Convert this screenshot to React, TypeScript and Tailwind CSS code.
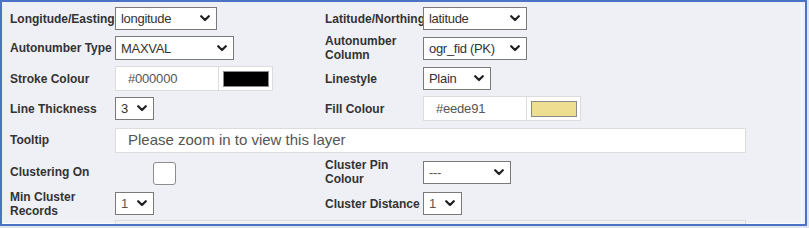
import React from "react";

const font = { fontFamily: '"Liberation Sans", Arial, sans-serif' };

function Chevron() {
  return (
    <svg width="10" height="7" viewBox="0 0 10 7" className="shrink-0">
      <polyline points="1.2,1.2 5,5 8.8,1.2" fill="none" stroke="#1f1f1f" strokeWidth="2.2" strokeLinecap="round" strokeLinejoin="round" />
    </svg>
  );
}

function Select({ value, w, h = "h-[23px]", muted = false }: { value: string; w: string; h?: string; muted?: boolean }) {
  return (
    <div className={`${w} ${h} flex items-center justify-between border border-[#7a7a7a] bg-white pl-[5px] pr-[6px] shrink-0`}>
      <span className={`text-[13px] tracking-[-0.3px] leading-none ${muted ? "text-[#555]" : "text-[#333]"}`}>{value}</span>
      <Chevron />
    </div>
  );
}

function ColourInput({ value, swatch }: { value: string; swatch: string }) {
  return (
    <div className="flex shrink-0">
      <div className="w-[104px] h-[25px] flex items-center border border-[#dcdcdc] bg-white pl-[12px] text-[13px] text-[#555] tracking-[-0.2px]">
        {value}
      </div>
      <div className="w-[54px] h-[25px] flex items-center justify-center border border-[#dcdcdc] border-l-0 bg-white">
        <div className={`w-[46px] h-[16px] border border-[#8a8a8a] ${swatch}`} />
      </div>
    </div>
  );
}

function Label({ children, w }: { children: React.ReactNode; w: string }) {
  return (
    <div className={`${w} shrink-0 text-[12px] font-bold leading-[14px] text-[#333]`}>{children}</div>
  );
}

export default function App() {
  return (
    <div style={font} className="w-[809px] h-[228px] bg-[#dfe5f0]">
      <div className="w-[807px] h-[226px] border-2 border-[#4a73c6] bg-[#eef0f5] overflow-hidden">
        <div className="h-full border-r border-b border-[#fafbfd] pl-[8px] pt-[2px] w-[800px] relative">
          {/* Row 1 */}
          <div className="h-[29px] flex items-center">
            <div className="w-[315px] flex items-center">
              <Label w="w-[105px]">Longitude/Easting</Label>
              <Select value="longitude" w="w-[102px]" />
            </div>
            <Label w="w-[98px]">Latitude/Northing</Label>
            <Select value="latitude" w="w-[104px]" />
          </div>
          {/* Row 2 */}
          <div className="h-[30px] flex items-center">
            <div className="w-[315px] flex items-center">
              <Label w="w-[105px]">Autonumber Type</Label>
              <Select value="MAXVAL" w="w-[119px]" h="h-[24px]" />
            </div>
            <Label w="w-[98px]">
              Autonumber
              <br />
              Column
            </Label>
            <Select value="ogr_fid (PK)" w="w-[104px]" />
          </div>
          {/* Row 3 */}
          <div className="h-[31px] flex items-center">
            <div className="w-[315px] flex items-center">
              <Label w="w-[105px]">Stroke Colour</Label>
              <ColourInput value="#000000" swatch="bg-black" />
            </div>
            <Label w="w-[98px]">Linestyle</Label>
            <Select value="Plain" w="w-[68px]" />
          </div>
          {/* Row 4 */}
          <div className="h-[29px] flex items-center">
            <div className="w-[315px] flex items-center">
              <Label w="w-[105px]">Line Thickness</Label>
              <Select value="3" w="w-[39px]" />
            </div>
            <Label w="w-[98px]">Fill Colour</Label>
            <ColourInput value="#eede91" swatch="bg-[#eede91]" />
          </div>
          {/* Row 5 */}
          <div className="h-[34px] flex items-center">
            <Label w="w-[105px]">Tooltip</Label>
            <div className="w-[631px] h-[25px] flex items-center border border-[#dcdcdc] bg-white pl-[12px] text-[15px] text-[#555]">
              Please zoom in to view this layer
            </div>
          </div>
          {/* Row 6 */}
          <div className="h-[30px] flex items-center">
            <div className="w-[315px] flex items-center">
              <Label w="w-[143px]">Clustering On</Label>
              <div className="w-[23px] h-[23px] mt-[2px] rounded-[3px] border border-[#8c8c8c] bg-white" />
            </div>
            <Label w="w-[98px]">
              Cluster Pin
              <br />
              Colour
            </Label>
            <Select value="---" w="w-[88px]" muted />
          </div>
          {/* Row 7 */}
          <div className="h-[33px] flex items-center">
            <div className="w-[315px] flex items-center">
              <Label w="w-[105px]">
                Min Cluster
                <br />
                Records
              </Label>
              <Select value="1" w="w-[39px]" muted />
            </div>
            <Label w="w-[98px]">Cluster Distance</Label>
            <Select value="1" w="w-[39px]" muted />
          </div>
          {/* Row 8 (cut off) */}
          <div className="flex">
            <div className="w-[105px] shrink-0" />
            <div className="w-[631px] h-[25px] border border-[#dcdcdc] bg-[#f0f2f6]" />
          </div>
        </div>
      </div>
    </div>
  );
}
